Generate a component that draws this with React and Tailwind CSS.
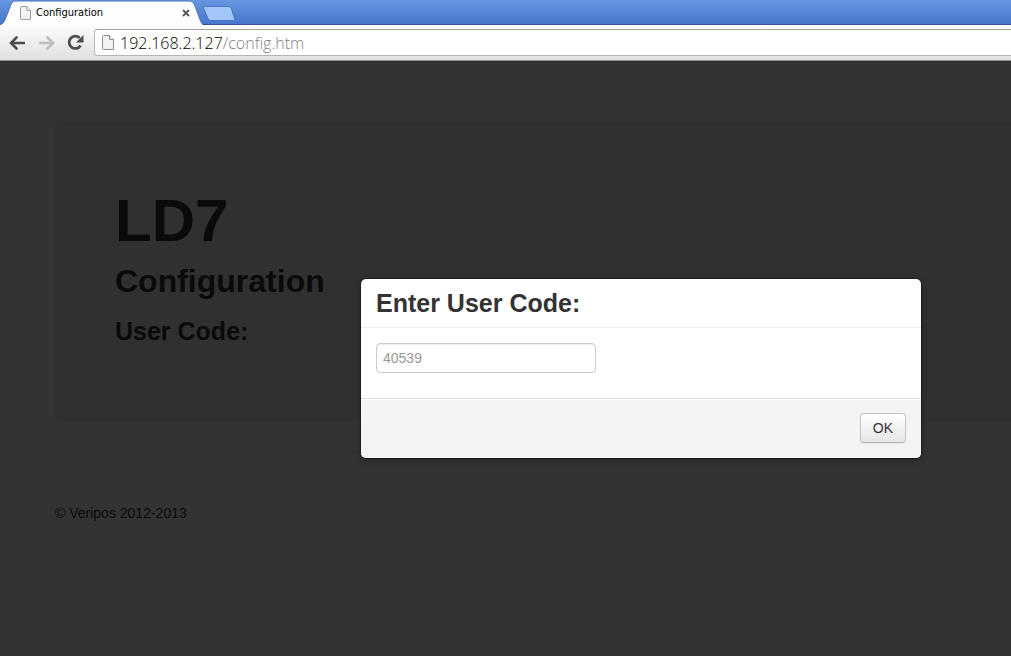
import { useState } from "react";

function PageIcon({ className }) {
  return (
    <svg viewBox="0 0 12 15" className={className} aria-hidden="true">
      <path
        d="M.5 1.5a1 1 0 0 1 1-1H7.5L11.5 4.5V14.5H1.5a1 1 0 0 1-1-1Z"
        fill="#f3f3f3"
        stroke="#8e8e8e"
      />
      <path d="M7.5.5V4.5H11.5" fill="#fff" stroke="#8e8e8e" />
    </svg>
  );
}

function ArrowIcon({ className }) {
  return (
    <svg viewBox="0 0 16 14" className={className} aria-hidden="true">
      <path
        d="M7.5 1.5 2 7l5.5 5.5M2.500 7H15"
        fill="none"
        stroke="currentColor"
        strokeWidth="2.6"
        strokeLinecap="round"
      />
    </svg>
  );
}

function ReloadIcon({ className }) {
  return (
    <svg viewBox="0 0 16 16" className={className} aria-hidden="true">
      <path
        d="M12 3.8A5.800 5.800 0 1 0 12.800 10.800"
        fill="none"
        stroke="currentColor"
        strokeWidth="2.6"
      />
      <path d="M15.5 1V8H8.500Z" fill="currentColor" />
    </svg>
  );
}

function TabStrip() {
  return (
    <div className="flex h-[25px] bg-linear-to-b from-[#6797e0] to-[#4674cb] shadow-[inset_0_-1px_0_#34529c]">
      <div className="relative w-[203px] shrink-0">
        <svg
          viewBox="0 0 203 25"
          className="absolute inset-0 size-full"
          aria-hidden="true"
        >
          <path
            d="M0 25C3 24 4 22 5 20L11 5C12 2 13 1.2 16 1.2H189C192 1.2 193 2 194.5 5L200 20C201 22.5 202 24 203 25Z"
            fill="#fdfdfd"
          />
          <path
            d="M0 24.500C3 24 4 22 5 20L11 5C12 2 13 1 16 1H189C192 1 193 2 194.500 5L200 20C201 22.500 202 24 203 24.500"
            fill="none"
            stroke="#3f66b4"
            strokeWidth=".7"
          />
        </svg>
        <div className="relative flex h-[26px] items-center pr-[9px] pl-5">
          <PageIcon className="h-[14px] w-[11px]" />
          <span className="ml-[5px] grow font-['DejaVu_Sans_Condensed','DejaVu_Sans',sans-serif] text-[11px] text-black">
            Configuration
          </span>
          <button aria-label="Close tab" className="p-1 text-[#555]">
            <svg viewBox="0 0 8 8" className="size-2" aria-hidden="true">
              <path
                d="M1 1l6 6M7 1 1 7"
                stroke="currentColor"
                strokeWidth="1.8"
              />
            </svg>
          </button>
        </div>
      </div>
      <button aria-label="New tab" className="self-center pt-px">
        <svg viewBox="0 0 32 15" className="h-[15px] w-8" aria-hidden="true">
          <path
            d="M2.5.5H25C27 .5 27.500 1 28.500 3L31.300 12C31.800 14 31.300 14.500 30 14.500H8C6.500 14.500 5.500 14 4.800 12L.8 3C.3 1.200.8.5 2.5.5Z"
            fill="#a1c7f8"
            stroke="#4067b5"
            strokeWidth=".8"
          />
        </svg>
      </button>
    </div>
  );
}

function Toolbar() {
  return (
    <div className="flex h-9 items-center border-b border-[#929292] bg-linear-to-b from-[#fdfdfd] to-[#dfdfdf] pl-[9px]">
      <button aria-label="Back" className="text-[#4d4d4d]">
        <ArrowIcon className="h-[14px] w-4" />
      </button>
      <button aria-label="Forward" className="ml-[14px] text-[#bdbdbd]">
        <ArrowIcon className="h-[14px] w-4 rotate-180" />
      </button>
      <button aria-label="Reload" className="ml-3 text-[#4d4d4d]">
        <ReloadIcon className="size-[17px]" />
      </button>
      <div className="ml-[10px] flex h-[27px] grow items-center rounded-l-[3px] border border-r-0 border-[#b5b5b5] border-t-[#a2a2a2] bg-white pl-[7px] font-['Open_Sans',sans-serif] text-base font-light">
        <PageIcon className="h-[15px] w-3" />
        <span className="ml-[6px] text-black">
          192.168.2.127<span className="text-[#808080]">/config.htm</span>
        </span>
      </div>
    </div>
  );
}

function CodeModal({ code, onChange, onSubmit }) {
  return (
    <form
      role="dialog"
      aria-labelledby="code-title"
      onSubmit={onSubmit}
      className="w-[560px] overflow-hidden rounded-[5px] bg-white shadow-[0_0_0_1px_rgba(0,0,0,0.3),0_3px_7px_rgba(0,0,0,0.3)]"
    >
      <div className="border-b border-[#eee] px-[15px] py-[9px]">
        <h3 id="code-title" className="text-[25px] leading-[30px] font-bold">
          <label htmlFor="user-code">Enter User Code:</label>
        </h3>
      </div>
      <div className="px-[15px] pt-[15px] pb-[25px]">
        <input
          id="user-code"
          type="text"
          placeholder="40539"
          value={code}
          onChange={onChange}
          className="block h-[30px] w-[220px] rounded-sm border border-[#ccc] px-[6px] text-sm text-[#555] shadow-[inset_0_1px_1px_rgba(0,0,0,0.075)] placeholder:text-[#999]"
        />
      </div>
      <div className="flex justify-end border-t border-[#ddd] bg-[#f4f4f4] px-[15px] pt-[14px] pb-[15px] shadow-[inset_0_1px_0_#fff]">
        <button
          type="submit"
          className="h-[30px] rounded-sm border border-[#c5c5c5] border-b-[#b3b3b3] bg-linear-to-b from-white to-[#e6e6e6] px-3 text-sm shadow-[inset_0_1px_0_rgba(255,255,255,0.2),0_1px_2px_rgba(0,0,0,0.05)]"
        >
          OK
        </button>
      </div>
    </form>
  );
}

export default function App() {
  const [code, setCode] = useState("");

  return (
    <div className="flex min-h-screen flex-col overflow-hidden">
      <header>
        <TabStrip />
        <Toolbar />
      </header>

      <div className="relative grow bg-white pt-[60px] pl-[55px] font-['Liberation_Sans',Arial,sans-serif] text-sm text-[#333]">
        <main className="rounded-l-md bg-[#eee] px-[60px] py-[70px] font-bold">
          <h1 className="text-[60px] leading-[60px]">LD7</h1>
          <h2 className="mt-[10px] text-[32px] leading-10">Configuration</h2>
          <h3 className="mt-[10px] text-[25px] leading-10">User Code:</h3>
        </main>
        <hr className="mt-[30px] border-[#eee]" />
        <footer className="mt-[51px]">© Veripos 2012-2013</footer>

        <div className="absolute inset-0 bg-black/80" />
        <div className="absolute inset-0 flex items-start justify-end pt-[218px] pr-[90px]">
          <CodeModal
            code={code}
            onChange={(e) => setCode(e.target.value)}
            onSubmit={(e) => e.preventDefault()}
          />
        </div>
      </div>
    </div>
  );
}
